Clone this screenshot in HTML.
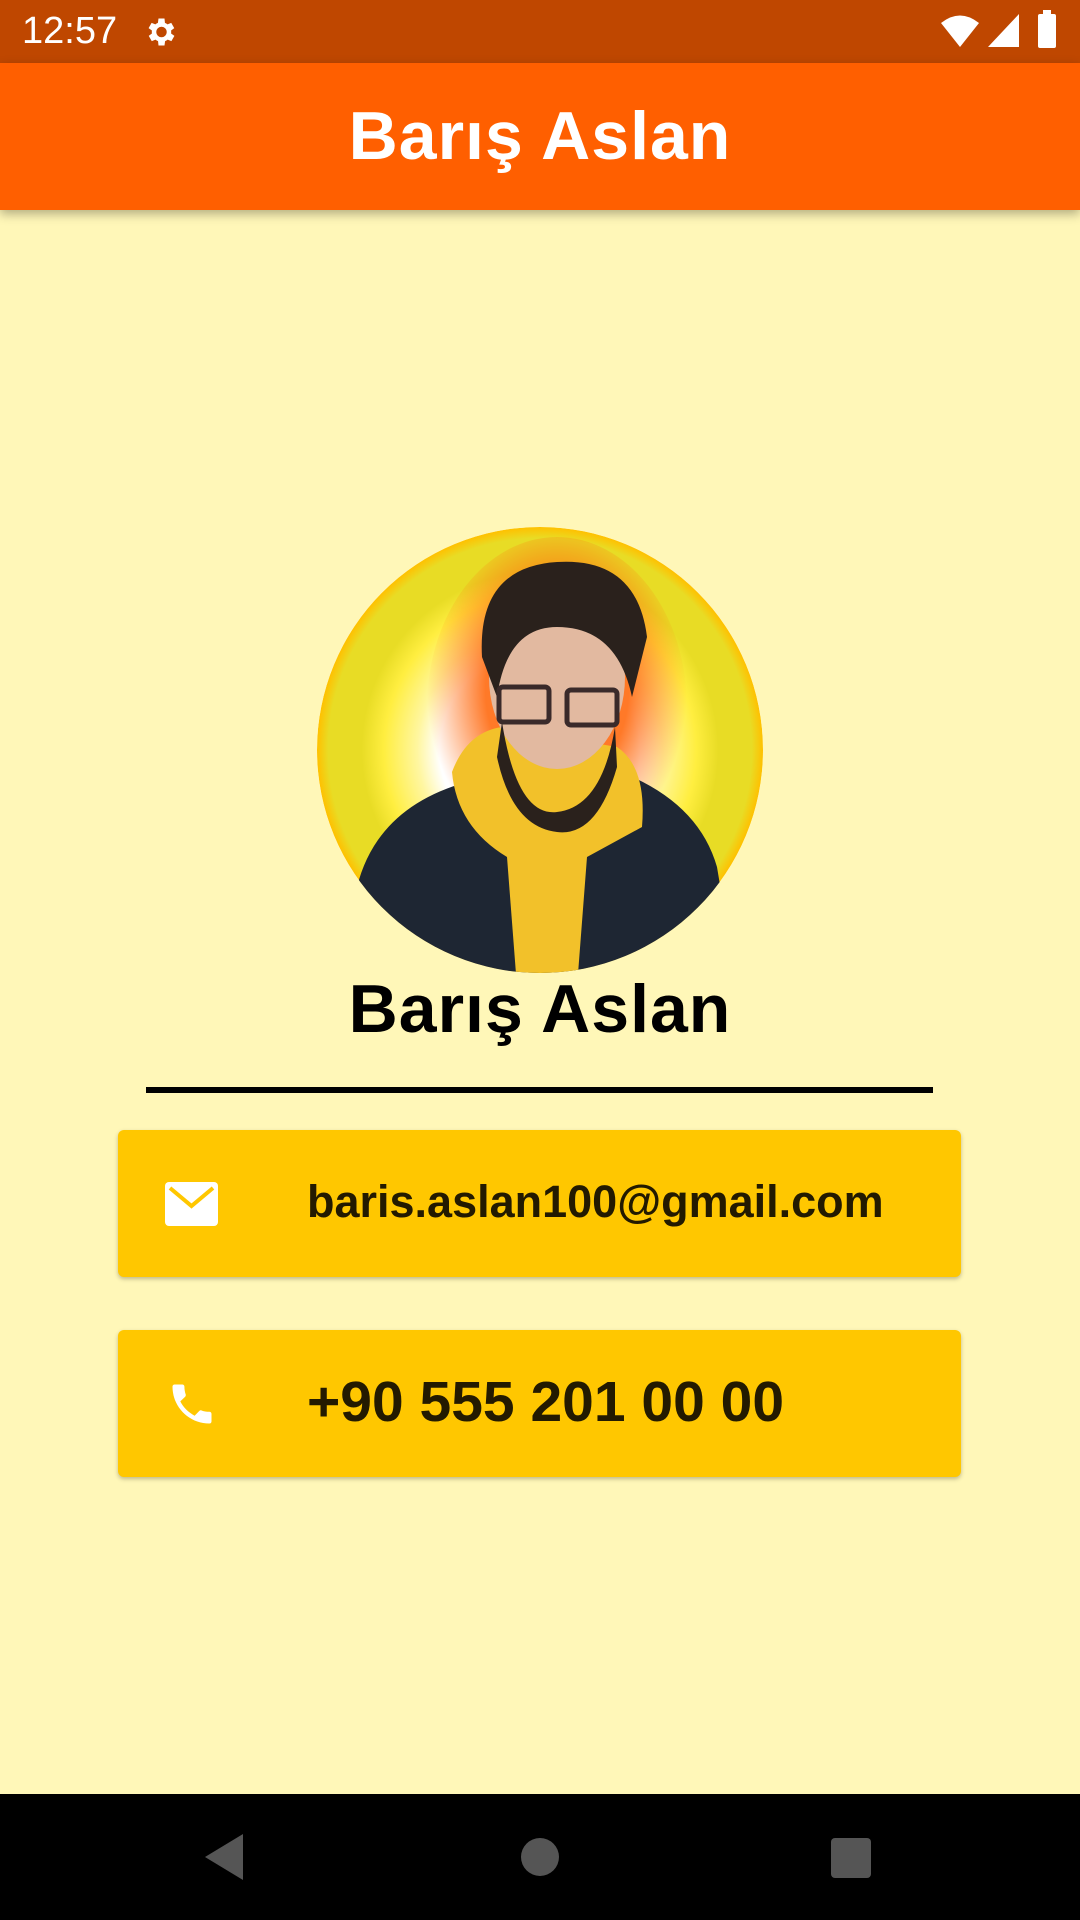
<!DOCTYPE html>
<html><head><meta charset="utf-8"><style>
*{margin:0;padding:0;box-sizing:border-box}
body{width:1080px;height:1920px;background:#FFF7B8;position:relative;overflow:hidden;font-family:"Liberation Sans",sans-serif}
.sb{position:absolute;top:0;left:0;width:1080px;height:63px;background:#BF4700;color:#fff}
.ab{position:absolute;top:63px;left:0;width:1080px;height:147px;background:#FF5F00;box-shadow:0 4px 10px rgba(0,0,0,.3);color:#fff;font-weight:bold;font-size:68px;text-align:center;line-height:147px;letter-spacing:1px}
.name{position:absolute;top:970px;left:0;width:1080px;text-align:center;font-weight:bold;font-size:68px;color:#000;letter-spacing:1px}
.line{position:absolute;top:1087px;left:146px;width:787px;height:6px;background:#000}
.card{position:absolute;left:118px;width:843px;height:147px;background:#FFC700;border-radius:6px;box-shadow:0 2px 4px rgba(0,0,0,.25);color:#231a00;font-weight:bold}
.nav{position:absolute;top:1794px;left:0;width:1080px;height:126px;background:#000}
</style></head><body>
<div class="sb">
<div style="position:absolute;left:22px;top:10px;font-size:38px">12:57</div>
<svg style="position:absolute;left:142px;top:14px" width="36" height="36" viewBox="0 0 24 24"><path fill="#fff" d="M19.4 13a7.5 7.5 0 0 0 0-2l2.1-1.6-2-3.5-2.5 1a7 7 0 0 0-1.7-1L15 3h-4l-.4 2.9a7 7 0 0 0-1.7 1l-2.5-1-2 3.5L6.6 11a7.5 7.5 0 0 0 0 2l-2.1 1.6 2 3.5 2.5-1a7 7 0 0 0 1.7 1L11 21h4l.4-2.9a7 7 0 0 0 1.7-1l2.5 1 2-3.5zM13 15.5a3.5 3.5 0 1 1 0-7 3.5 3.5 0 0 1 0 7z"/></svg>
<svg style="position:absolute;left:940px;top:14px" width="40" height="34" viewBox="0 0 40 34"><path fill="#fff" d="M20 33 L1 9 Q20 -6 39 9Z"/></svg>
<svg style="position:absolute;left:988px;top:14px" width="32" height="34" viewBox="0 0 32 34"><path fill="#fff" d="M31 0V33H0Z"/></svg>
<div style="position:absolute;left:1038px;top:14px;width:18px;height:34px;background:#fff;border-radius:2px"></div>
<div style="position:absolute;left:1043px;top:10px;width:8px;height:5px;background:#fff"></div>
</div>
<div class="ab">Barış Aslan</div>
<svg style="position:absolute;left:317px;top:527px" width="446" height="446" viewBox="0 0 446 446">
<defs>
<radialGradient id="g" cx="50%" cy="50%" r="50%">
<stop offset="0" stop-color="#fff"/><stop offset=".45" stop-color="#fff"/><stop offset=".55" stop-color="#FFF6A0"/><stop offset=".7" stop-color="#FFEE40"/><stop offset=".8" stop-color="#E8DC25"/><stop offset=".95" stop-color="#E8DC25"/><stop offset="1" stop-color="#FFC000"/></radialGradient>
<radialGradient id="o" cx="50%" cy="45%" r="50%"><stop offset=".55" stop-color="#FF6A10" stop-opacity=".9"/><stop offset="1" stop-color="#FF6A10" stop-opacity="0"/></radialGradient>
<clipPath id="c"><circle cx="223" cy="223" r="223"/></clipPath>
</defs>
<g clip-path="url(#c)">
<circle cx="223" cy="223" r="223" fill="url(#g)"/>
<ellipse cx="240" cy="180" rx="130" ry="170" fill="url(#o)"/>
<path d="M40 360 Q60 280 150 255 L200 230 L290 240 Q380 270 400 340 L420 460 L30 460Z" fill="#1e2633"/>
<path d="M135 245 Q150 205 185 200 L300 220 Q330 240 325 300 L270 330 L260 460 L200 460 L190 330 Q140 300 135 245Z" fill="#F2C12A"/>
<ellipse cx="240" cy="150" rx="68" ry="92" fill="#e2b9a0"/>
<path d="M185 195 Q200 290 240 285 Q285 280 298 200 L300 240 Q280 310 240 305 Q195 300 180 230Z" fill="#2a211c"/>
<path d="M165 130 Q160 40 240 35 Q320 30 330 110 L315 170 Q300 100 240 100 Q190 100 180 170Z" fill="#2a211c"/>
<rect x="182" y="160" width="50" height="35" rx="4" fill="none" stroke="#3a2a2a" stroke-width="5"/>
<rect x="250" y="163" width="50" height="35" rx="4" fill="none" stroke="#3a2a2a" stroke-width="5"/>
</g>
</svg>
<div class="name">Barış Aslan</div>
<div class="line"></div>
<div class="card" style="top:1130px">
<svg style="position:absolute;left:47px;top:52px" width="53" height="44" viewBox="0 0 53 44"><rect width="53" height="44" rx="4" fill="#fff"/><path d="M5 6 L26.5 24 L48 6" fill="none" stroke="#FFC700" stroke-width="4"/></svg>
<div style="position:absolute;left:189px;top:46px;font-size:45px">baris.aslan100@gmail.com</div>
</div>
<div class="card" style="top:1330px">
<svg style="position:absolute;left:48px;top:48px" width="52" height="52" viewBox="0 0 24 24"><path fill="#fff" d="M6.6 10.8c1.4 2.8 3.8 5.1 6.6 6.6l2.2-2.2c.3-.3.7-.4 1-.2 1.1.4 2.3.6 3.6.6.6 0 1 .4 1 1V20c0 .6-.4 1-1 1C10.6 21 3 13.4 3 4c0-.6.4-1 1-1h3.5c.6 0 1 .4 1 1 0 1.3.2 2.5.6 3.6.1.3 0 .7-.2 1z"/></svg>
<div style="position:absolute;left:189px;top:39px;font-size:57px">+90 555 201 00 00</div>
</div>
<div class="nav">
<svg style="position:absolute;left:205px;top:40px" width="40" height="46" viewBox="0 0 40 46"><path d="M38 0V46L0 23Z" fill="#555"/></svg>
<div style="position:absolute;left:521px;top:44px;width:38px;height:38px;border-radius:50%;background:#555"></div>
<div style="position:absolute;left:831px;top:44px;width:40px;height:40px;border-radius:4px;background:#555"></div>
</div>
</body></html>
